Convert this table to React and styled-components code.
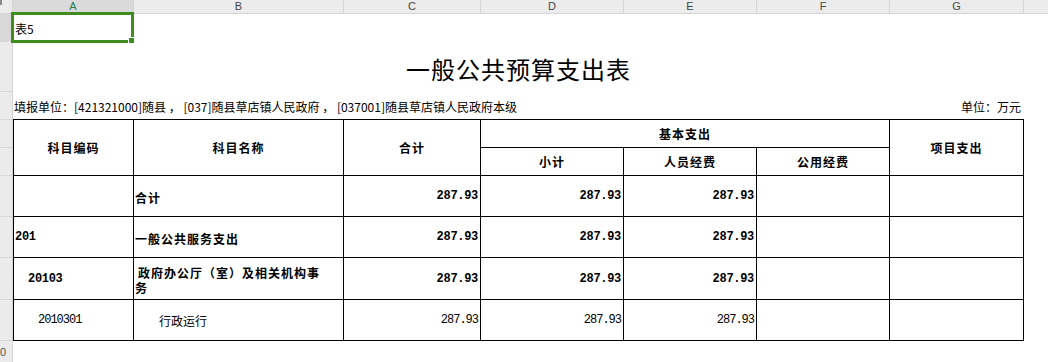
import styled, { createGlobalStyle } from "styled-components";

const GlobalStyle = createGlobalStyle`
  * { box-sizing: border-box; }
  html, body {
    margin: 0;
    padding: 0;
    background: #fff;
    overflow: hidden;
  }
  body {
    font-family: "Noto Sans CJK SC", "Liberation Sans", sans-serif;
    color: #000;
  }
`;

const columns = [
  { key: "A", width: 121 },
  { key: "B", width: 210 },
  { key: "C", width: 137 },
  { key: "D", width: 143 },
  { key: "E", width: 133 },
  { key: "F", width: 133 },
  { key: "G", width: 134 },
  { key: "", width: 40 },
];

const rowHeights = [28, 50, 28, 28, 28, 41, 41, 42, 41, 40];

const rows = [
  { code: "", name: "合计", total: "287.93", sub: "287.93", staff: "287.93", bold: true, codeIndent: 0, nameIndent: 0 },
  { code: "201", name: "一般公共服务支出", total: "287.93", sub: "287.93", staff: "287.93", bold: true, codeIndent: 0, nameIndent: 0 },
  { code: "20103", name: "政府办公厅（室）及相关机构事\n务", total: "287.93", sub: "287.93", staff: "287.93", bold: true, codeIndent: 13, nameIndent: 3 },
  { code: "2010301", name: "行政运行", total: "287.93", sub: "287.93", staff: "287.93", bold: false, codeIndent: 23, nameIndent: 24 },
];

const Sheet = styled.div`
  width: 1048px;
  height: 362px;
  display: flex;
  flex-direction: column;
  overflow: hidden;
`;

const ColumnBar = styled.div`
  display: flex;
  height: 14px;
  flex: none;
  background: #ececec;
  border-bottom: 1px solid #d4d4d4;
  overflow: hidden;
`;

const Corner = styled.div`
  width: 13px;
  flex: none;
  border-right: 1px solid #d4d4d4;
  position: relative;
  &::before {
    content: "";
    position: absolute;
    left: 0;
    top: 0;
    width: 2px;
    height: 5px;
    background: #8a8a8a;
  }
`;

const ColumnHead = styled.div`
  width: ${(p) => p.$width}px;
  flex: none;
  border-right: 1px solid #d4d4d4;
  background: ${(p) => (p.$active ? "#dadada" : "#ececec")};
  color: ${(p) => (p.$active ? "#237a57" : "#444")};
  font-family: "Liberation Sans", Arial, sans-serif;
  font-size: 11px;
  line-height: 12px;
  text-align: center;
  height: 13px;
`;

const Body = styled.div`
  display: flex;
  flex: 1;
  min-height: 0;
`;

const RowBar = styled.div`
  width: 13px;
  flex: none;
  display: flex;
  flex-direction: column;
  background: #ebebeb;
  border-right: 1px solid #d4d4d4;
  overflow: hidden;
`;

const RowHead = styled.div`
  height: ${(p) => p.$height}px;
  flex: none;
  border-bottom: 1px solid #d7d7d7;
  background: ${(p) => (p.$active ? "#d8d8d8" : "#ebebeb")};
  color: #555;
  font-family: "Liberation Sans", Arial, sans-serif;
  font-size: 11px;
  display: flex;
  align-items: flex-start;
  padding-top: 5px;
  white-space: nowrap;
`;

const Content = styled.div`
  flex: 1;
  display: flex;
  flex-direction: column;
`;

const FirstRow = styled.div`
  height: 28px;
  display: flex;
`;

const ActiveCell = styled.div`
  position: relative;
  width: 120px;
  height: 28px;
  font-size: 12px;
  display: flex;
  align-items: center;
  padding-left: 2px;
`;

const Selection = styled.div`
  position: absolute;
  left: -2px;
  top: -2px;
  width: 123px;
  height: 31px;
  border: 3px solid #3f8c1f;
  pointer-events: none;
`;

const Handle = styled.div`
  position: absolute;
  right: -4px;
  bottom: -4px;
  width: 7px;
  height: 7px;
  background: #3f8c1f;
  border: 1px solid #fff;
`;

const TitleRow = styled.div`
  width: 1011px;
  height: 50px;
  display: flex;
  align-items: center;
  justify-content: center;
  padding-top: 3px;
  font-size: 24px;
  letter-spacing: 1px;
  font-weight: 400;
`;

const InfoRow = styled.div`
  width: 1011px;
  height: 27px;
  display: flex;
  align-items: center;
  justify-content: space-between;
  padding: 1px 3px 0 1px;
  font-size: 12px;
  white-space: pre;
`;

const Table = styled.div`
  display: grid;
  grid-template-columns: 120px 210px 137px 143px 133px 133px 134px;
  grid-template-rows: 28px 28px 41px 41px 42px 41px;
  width: 1011px;
  border-top: 1px solid #000;
  border-left: 1px solid #000;
`;

const HeadCell = styled.div`
  grid-column: ${(p) => p.$col};
  grid-row: ${(p) => p.$row};
  border-right: 1px solid #000;
  border-bottom: 1px solid #000;
  display: flex;
  align-items: center;
  justify-content: center;
  font-size: 12px;
  font-weight: 700;
  letter-spacing: 1px;
`;

const Cell = styled.div`
  border-right: 1px solid #000;
  border-bottom: 1px solid #000;
  display: flex;
  align-items: center;
  justify-content: ${(p) => (p.$right ? "flex-end" : "flex-start")};
  padding: ${(p) => (p.$right ? "0 2px 0 0" : "0 0 0 1px")};
  font-size: 12px;
  font-weight: ${(p) => (p.$bold ? 700 : 400)};
  overflow: hidden;
`;

const NameText = styled.span`
  white-space: pre-line;
  line-height: 15px;
  padding-top: ${(p) => (p.$bold ? 2 : 0)}px;
  text-indent: ${(p) => p.$indent}px;
  letter-spacing: ${(p) => (p.$bold ? 1 : 0)}px;
`;

const Num = styled.span`
  font-family: "Liberation Mono", "DejaVu Sans Mono", monospace;
  font-size: 12px;
  letter-spacing: ${(p) => (p.$bold ? -0.3 : -1)}px;
  padding-left: ${(p) => p.$indent || 0}px;
`;

function App() {
  return (
    <>
      <GlobalStyle />
      <Sheet>
        <ColumnBar>
          <Corner />
          {columns.map((c, i) => (
            <ColumnHead key={i} $width={c.width} $active={c.key === "A"}>
              {c.key}
            </ColumnHead>
          ))}
        </ColumnBar>
        <Body>
          <RowBar>
            {rowHeights.map((h, i) => (
              <RowHead key={i} $height={h} $active={i === 0}>
                {i === 9 ? "0" : ""}
              </RowHead>
            ))}
          </RowBar>
          <Content>
            <FirstRow>
              <ActiveCell>
                表5
                <Selection>
                  <Handle />
                </Selection>
              </ActiveCell>
            </FirstRow>
            <TitleRow>一般公共预算支出表</TitleRow>
            <InfoRow>
              <span>填报单位：[421321000]随县 ， [037]随县草店镇人民政府 ， [037001]随县草店镇人民政府本级</span>
              <span>单位：万元</span>
            </InfoRow>
            <Table>
              <HeadCell $col="1" $row="1 / span 2">科目编码</HeadCell>
              <HeadCell $col="2" $row="1 / span 2">科目名称</HeadCell>
              <HeadCell $col="3" $row="1 / span 2">合计</HeadCell>
              <HeadCell $col="4 / span 3" $row="1">基本支出</HeadCell>
              <HeadCell $col="7" $row="1 / span 2">项目支出</HeadCell>
              <HeadCell $col="4" $row="2">小计</HeadCell>
              <HeadCell $col="5" $row="2">人员经费</HeadCell>
              <HeadCell $col="6" $row="2">公用经费</HeadCell>
              {rows.map((r, i) => (
                <Row key={i} row={r} />
              ))}
            </Table>
          </Content>
        </Body>
      </Sheet>
    </>
  );
}

function Row({ row }) {
  return (
    <>
      <Cell $bold={row.bold}>
        <Num $bold={row.bold} $indent={row.codeIndent}>{row.code}</Num>
      </Cell>
      <Cell $bold={row.bold}>
        <NameText $indent={row.nameIndent} $bold={row.bold}>{row.name}</NameText>
      </Cell>
      <Cell $right $bold={row.bold}>
        <Num $bold={row.bold}>{row.total}</Num>
      </Cell>
      <Cell $right $bold={row.bold}>
        <Num $bold={row.bold}>{row.sub}</Num>
      </Cell>
      <Cell $right $bold={row.bold}>
        <Num $bold={row.bold}>{row.staff}</Num>
      </Cell>
      <Cell />
      <Cell />
    </>
  );
}

export default App;
